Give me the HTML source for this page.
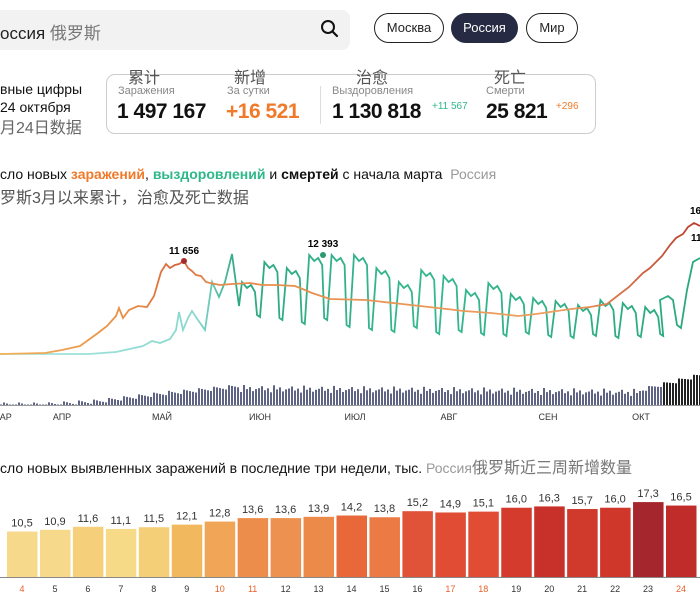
<!DOCTYPE html>
<html><head><meta charset="utf-8">
<style>
body{margin:0;width:700px;height:600px;overflow:hidden;background:#fff;font-family:"Liberation Sans","Noto Sans CJK SC",sans-serif;color:#111;position:relative}
.a{position:absolute;white-space:nowrap}
.btn{position:absolute;top:13px;height:30px;border:1px solid #222;border-radius:16px;box-sizing:border-box;font-size:13px;line-height:28px;text-align:center;color:#222}
.lbl{font-size:11px;color:#888}
.num{font-size:21px;font-weight:bold;letter-spacing:-0.5px}
.cn{font-size:16px;color:#555}
</style></head><body>
<div class="a" style="left:-10px;top:10px;width:360px;height:40px;background:#f2f2f2;border-radius:8px"></div>
<div class="a" style="left:0;top:19px;font-size:17px;color:#222">оссия <span style="color:#777">俄罗斯</span></div>
<svg class="a" style="left:320px;top:19px" width="20" height="20" viewBox="0 0 20 20"><circle cx="8" cy="8" r="6" fill="none" stroke="#111" stroke-width="2"/><line x1="12.5" y1="12.5" x2="17" y2="17" stroke="#111" stroke-width="2.2" stroke-linecap="round"/></svg>
<div class="btn" style="left:374px;width:70px">Москва</div>
<div class="btn" style="left:451px;width:67px;background:#262a42;border-color:#262a42;color:#fff">Россия</div>
<div class="btn" style="left:526px;width:52px">Мир</div>

<div class="a" style="left:0;top:81px;font-size:14px">вные цифры</div>
<div class="a" style="left:0;top:99px;font-size:14px">24 октября</div>
<div class="a" style="left:0;top:114px;font-size:16px;color:#666">月24日数据</div>

<div class="a" style="left:106px;top:74px;width:490px;height:60px;border:1px solid #ccc;border-radius:9px;box-sizing:border-box"></div>
<div class="a" style="left:320px;top:86px;width:1px;height:38px;background:#ddd"></div>
<div class="a cn" style="left:128px;top:64px">累计</div>
<div class="a cn" style="left:234px;top:64px">新增</div>
<div class="a cn" style="left:356px;top:64px">治愈</div>
<div class="a cn" style="left:494px;top:64px">死亡</div>
<div class="a lbl" style="left:118px;top:85px">Заражения</div>
<div class="a lbl" style="left:227px;top:85px">За сутки</div>
<div class="a lbl" style="left:332px;top:85px">Выздоровления</div>
<div class="a lbl" style="left:486px;top:85px">Смерти</div>
<div class="a num" style="left:117px;top:100px">1 497 167</div>
<div class="a num" style="left:226px;top:100px;color:#f07a2a">+16 521</div>
<div class="a num" style="left:332px;top:100px">1 130 818</div>
<div class="a" style="left:432px;top:101px;font-size:10px;color:#2eb88a">+11 567</div>
<div class="a num" style="left:486px;top:100px">25 821</div>
<div class="a" style="left:556px;top:101px;font-size:10px;color:#f07a2a">+296</div>

<div class="a" style="left:0;top:166px;font-size:14px">сло новых <b style="color:#f07a2a">заражений</b>, <b style="color:#2eb88a">выздоровлений</b> и <b>смертей</b> с начала марта &nbsp;<span style="color:#999">Россия</span></div>
<div class="a" style="left:0;top:184px;font-size:16px;color:#555">罗斯3月以来累计，治愈及死亡数据</div>

<svg class="a" style="left:0;top:0" width="700" height="430" id="ch">
<defs>
<linearGradient id="go" x1="0" x2="700" gradientUnits="userSpaceOnUse"><stop offset="0" stop-color="#f2b25a"/><stop offset="0.2" stop-color="#e88a45"/><stop offset="0.25" stop-color="#d4643a"/><stop offset="0.3" stop-color="#e58a4a"/><stop offset="0.8" stop-color="#eea060"/><stop offset="1" stop-color="#b8382a"/></linearGradient>
<linearGradient id="gt" x1="0" x2="700" gradientUnits="userSpaceOnUse"><stop offset="0" stop-color="#a8e6e0"/><stop offset="0.28" stop-color="#8ad8d0"/><stop offset="0.34" stop-color="#2ea882"/><stop offset="0.6" stop-color="#35b890"/><stop offset="1" stop-color="#2aa880"/></linearGradient>
</defs>
<g id="bars"></g>
<polyline id="rec" fill="none" stroke="url(#gt)" stroke-width="1.8"/>
<polyline fill="none" stroke="url(#go)" stroke-width="1.8" points="0,354 45,353 62,350 80,346 98,333 107,326 116,316 119,308 123,318 129,310 138,306 147,307 154,296 161,272 166,264 170,268 175,265 179,264 184,261 188,268 192,271 196,275 201,276 206,282 210,283 220,285 232,284 250,283 262,285 277,285 295,286 305,290 312,293 330,299 366,300 402,304 429,307 464,311 491,313 518,316 536,314 571,309 590,307 607,304 616,297 629,287 636,280 643,273 650,268 656,262 662,256 670,245 676,238 683,234 688,227 694,223 700,226"/>
<circle cx="184" cy="261" r="3" fill="#a82a2a"/>
<circle cx="323" cy="255" r="3" fill="#2a9a70"/>
<text x="184" y="254" font-size="10" font-weight="bold" text-anchor="middle" font-family="Liberation Sans">11 656</text>
<text x="323" y="247" font-size="10" font-weight="bold" text-anchor="middle" font-family="Liberation Sans">12 393</text>
<text x="690" y="214" font-size="10" font-weight="bold" font-family="Liberation Sans">16</text>
<text x="691" y="241" font-size="10" font-weight="bold" font-family="Liberation Sans">11</text>
<g font-size="9" fill="#333" font-family="Liberation Sans" text-anchor="middle">
<text x="2" y="420">МАР</text><text x="62" y="420">АПР</text><text x="162" y="420">МАЙ</text><text x="260" y="420">ИЮН</text><text x="355" y="420">ИЮЛ</text><text x="449" y="420">АВГ</text><text x="548" y="420">СЕН</text><text x="641" y="420">ОКТ</text>
</g>
<line x1="0" y1="405.5" x2="700" y2="405.5" stroke="#999" stroke-width="1"/>
</svg>

<div class="a" style="left:0;top:454px;font-size:14px">сло новых выявленных заражений в последние три недели, тыс. <span style="color:#999">Россия</span><span style="color:#777;font-size:16px">俄罗斯近三周新增数量</span></div>
<svg class="a" style="left:0;top:470px" width="700" height="130" id="bc"></svg>

<script>
(function(){
var p=[[0,354],[89,354],[116,352],[143,346],[152,341],[160,343],[170,339],[176,330],[179,312],[183,330],[188,318],[192,311],[198,320],[205,330],[212,282],[219,297],[225,282],[232,254],[239,306]];
var x=239,i=0;
var his=[282,262,268,292,283,255,268,282,270,276,290,283,294,298,301,305,300,303,307,306,305,310,312,300,296,290];
var los=[315,318,322,318,325,328,330,326,332,330,333,334,332,335,336,334,336,335,334,333,332,330,328];
while(x<650){
 var hi=his[i%his.length], lo=los[i%los.length];
 if(x>300&&x<330){hi=255;}
 p.push([x+3,hi]);p.push([x+8,hi+6]);p.push([x+12,hi+3]);p.push([x+16,hi+10]);p.push([x+18,lo]);p.push([x+21,lo+2]);
 x+=22.4;i++;
}
p.push([660,300]);p.push([668,296]);p.push([673,300]);p.push([677,325]);p.push([681,328]);p.push([687,290]);p.push([693,262]);p.push([700,258]);
document.getElementById("rec").setAttribute("points",p.map(function(a){return a[0].toFixed(1)+","+a[1].toFixed(1)}).join(" "));
var g=document.getElementById("bars"),s="";
for(var bx=0;bx<700;bx+=3){
 var h;
 if(bx<45)h=0.5;else if(bx<100)h=0.5+(bx-45)*0.06;else if(bx<170)h=4+(bx-100)*0.12;else if(bx<240)h=12+(bx-170)*0.1;
 else if(bx<640)h=15-(bx-240)*0.01+((bx*7)%6);else h=15+(bx-640)*0.25;
 h+=((bx*13)%5)-2; if(h<0.5)h=0.5;
 var c=bx>660?"#222":"#5f6384";
 s+='<rect x="'+bx.toFixed(1)+'" y="'+(405-h).toFixed(1)+'" width="2" height="'+h.toFixed(1)+'" fill="'+c+'"/>';
}
g.innerHTML=s;
var v=[10.5,10.9,11.6,11.1,11.5,12.1,12.8,13.6,13.6,13.9,14.2,13.8,15.2,14.9,15.1,16.0,16.3,15.7,16.0,17.3,16.5];
var cols=["#f6d98a","#f6d98a","#f5cf7a","#f6da88","#f5ce78","#f2b85e","#f0a656","#ec8d4c","#ec9150","#ec8a4a","#e8683a","#ec7a44","#e05338","#e04c34","#e04c34","#d43b2c","#c8302a","#d03a2c","#d0372b","#a5262c","#bf2c2a"];
var red={0:1,6:1,7:1,13:1,14:1,20:1};
var b="";
for(var k=0;k<21;k++){
 var cx=22+k*32.95,h=v[k]*4.33,top=107-h;
 b+='<rect x="'+(cx-15)+'" y="'+top+'" width="30.5" height="'+h+'" fill="'+cols[k]+'"/>';
 b+='<text x="'+cx+'" y="'+(top-5)+'" font-size="11" text-anchor="middle" fill="#333" font-family="Liberation Sans">'+v[k].toFixed(1).replace(".",",")+'</text>';
 b+='<text x="'+cx+'" y="122" font-size="9" text-anchor="middle" fill="'+(red[k]?"#e8602c":"#333")+'" font-family="Liberation Sans">'+(k+4)+'</text>';
}
b+='<line x1="0" y1="107.5" x2="700" y2="107.5" stroke="#888"/>';
document.getElementById("bc").innerHTML=b;
})();
</script>
</body></html>
